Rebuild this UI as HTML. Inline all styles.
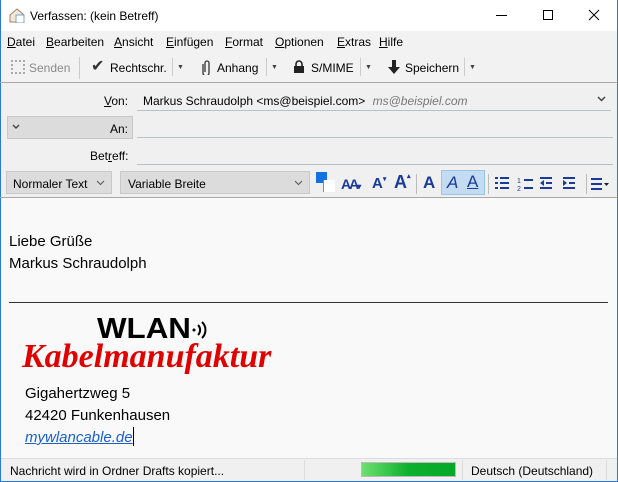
<!DOCTYPE html>
<html><head><meta charset="utf-8"><style>
*{margin:0;padding:0;box-sizing:border-box}
body{width:618px;height:482px;overflow:hidden;font-family:"Liberation Sans",sans-serif;font-size:12px;color:#000;background:#f0f0f0;position:relative}
.win{position:absolute;left:0;top:0;width:618px;height:482px;border:1px solid #2b79d6;border-top:none}
.a{position:absolute;white-space:nowrap}
u{text-decoration:underline}
.line{position:absolute;height:1px;background:#b8c0cc}
.btn{position:absolute;background:#dcdcdc;border:1px solid #c8c8c8}
.ic{position:absolute;color:#1a3a9c;font-weight:bold}
.dd{position:absolute;font-size:7px;color:#444}
</style></head><body>
<div class="a" style="left:0;top:0;width:618px;height:31px;background:#fff"></div>
<div class="a" style="left:0;top:31px;width:618px;height:53px;background:#f2f2f2"></div>
<div class="win"></div>
<svg class="a" style="left:9px;top:7px" width="16" height="16"><path d="M1 8 L8 2 L15 8 V15 H1Z" fill="#f4e8d8" stroke="#a08060"/><rect x="7" y="8" width="8" height="8" fill="#fff" stroke="#7aa0d0"/></svg>
<div class="a" style="left:30px;top:9px">Verfassen: (kein Betreff)</div>
<div class="a" style="left:496px;top:15px;width:11px;height:1px;background:#000"></div>
<div class="a" style="left:543px;top:10px;width:10px;height:10px;border:1px solid #000"></div>
<svg class="a" style="left:588px;top:9px" width="12" height="12"><path d="M1 1L11 11M11 1L1 11" stroke="#000"/></svg>
<div class="a" style="left:7px;top:35px"><u>D</u>atei</div>
<div class="a" style="left:46px;top:35px"><u>B</u>earbeiten</div>
<div class="a" style="left:114px;top:35px"><u>A</u>nsicht</div>
<div class="a" style="left:166px;top:35px"><u>E</u>infügen</div>
<div class="a" style="left:225px;top:35px"><u>F</u>ormat</div>
<div class="a" style="left:275px;top:35px"><u>O</u>ptionen</div>
<div class="a" style="left:337px;top:35px"><u>E</u>xtras</div>
<div class="a" style="left:379px;top:35px"><u>H</u>ilfe</div>
<div class="a" style="left:11px;top:60px;width:14px;height:14px;border:2px dotted #aaa"></div>
<div class="a" style="left:29px;top:61px;color:#8a8a8a">Senden</div>
<div class="a" style="left:79px;top:57px;width:1px;height:22px;background:#ccc"></div>
<div class="a" style="left:91px;top:56px;font-size:16px;color:#333">✔</div>
<div class="a" style="left:110px;top:61px">Rechtschr.</div>
<div class="a" style="left:172px;top:58px;width:1px;height:18px;background:#ccc"></div>
<div class="dd" style="left:177px;top:64px">▼</div>
<svg class="a" style="left:202px;top:59px" width="10" height="16"><path d="M3 13V4a2 2 0 0 1 4 0v10a3 3 0 0 1-6 0V5" fill="none" stroke="#333" stroke-width="1.3"/></svg>
<div class="a" style="left:217px;top:61px">Anhang</div>
<div class="a" style="left:266px;top:58px;width:1px;height:18px;background:#ccc"></div>
<div class="dd" style="left:271px;top:64px">▼</div>
<svg class="a" style="left:293px;top:60px" width="12" height="14"><path d="M3 7V4a3 3 0 0 1 6 0v3" fill="none" stroke="#222" stroke-width="1.6"/><rect x="1" y="6" width="10" height="7" fill="#222"/></svg>
<div class="a" style="left:311px;top:61px">S/MIME</div>
<div class="a" style="left:360px;top:58px;width:1px;height:18px;background:#ccc"></div>
<div class="dd" style="left:365px;top:64px">▼</div>
<svg class="a" style="left:388px;top:60px" width="12" height="14"><path d="M4 0h4v7h4l-6 7-6-7h4z" fill="#222"/></svg>
<div class="a" style="left:405px;top:61px">Speichern</div>
<div class="a" style="left:464px;top:58px;width:1px;height:18px;background:#ccc"></div>
<div class="dd" style="left:469px;top:64px">▼</div>
<div class="a" style="left:0;top:82px;width:618px;height:1px;background:#a8a8a8"></div>
<div class="a" style="left:104px;top:94px"><u>V</u>on:</div>
<div class="a" style="left:143px;top:94px">Markus Schraudolph &lt;ms@beispiel.com&gt; <span style="font-style:italic;color:#777;margin-left:4px">ms@beispiel.com</span></div>
<svg class="a" style="left:597px;top:96px" width="9" height="6"><path d="M1 1l3.5 3.5L8 1" fill="none" stroke="#444" stroke-width="1.5"/></svg>
<div class="line" style="left:137px;top:110px;width:474px"></div>
<div class="btn" style="left:7px;top:116px;width:126px;height:23px"></div>
<svg class="a" style="left:12px;top:124px" width="8" height="5"><path d="M1 1l3 3 3-3" fill="none" stroke="#444" stroke-width="1.4"/></svg>
<div class="a" style="left:110px;top:122px">An:</div>
<div class="line" style="left:137px;top:137px;width:476px"></div>
<div class="a" style="left:90px;top:149px">Bet<u>r</u>eff:</div>
<div class="line" style="left:137px;top:164px;width:476px"></div>
<div class="btn" style="left:6px;top:171px;width:106px;height:23px"></div>
<div class="a" style="left:13px;top:177px">Normaler Text</div>
<svg class="a" style="left:96px;top:180px" width="9" height="6"><path d="M1 1l3.5 3.5L8 1" fill="none" stroke="#555" stroke-width="1"/></svg>
<div class="btn" style="left:120px;top:171px;width:190px;height:23px"></div>
<div class="a" style="left:128px;top:177px">Variable Breite</div>
<svg class="a" style="left:294px;top:180px" width="9" height="6"><path d="M1 1l3.5 3.5L8 1" fill="none" stroke="#555" stroke-width="1"/></svg>
<div class="a" style="left:316px;top:172px;width:11px;height:11px;background:#1570e0"></div>
<div class="a" style="left:323px;top:180px;width:12px;height:12px;background:#fff;border-left:1px solid #888"></div>
<div class="ic" style="left:341px;top:176px;font-size:14px;letter-spacing:-2px">AA<span style="font-size:8px;letter-spacing:0">▾</span></div>
<div class="ic" style="left:372px;top:175px;font-size:15px">A<span style="font-size:7px;vertical-align:top">▾</span></div>
<div class="ic" style="left:394px;top:172px;font-size:18px">A<span style="font-size:7px;vertical-align:top">▴</span></div>
<div class="a" style="left:416px;top:174px;width:1px;height:20px;background:#bbb"></div>
<div class="ic" style="left:423px;top:173px;font-size:17px">A</div>
<div class="a" style="left:441px;top:170px;width:44px;height:25px;background:#c4dcf2;border:1px solid #9cc4ea"></div>
<div class="ic" style="left:447px;top:173px;font-size:17px;font-style:italic;font-weight:normal">A</div>
<div class="ic" style="left:467px;top:172px;font-size:17px;font-weight:normal;text-decoration:underline">A</div>
<div class="a" style="left:488px;top:174px;width:1px;height:20px;background:#bbb"></div>
<svg class="a" style="left:494px;top:176px" width="118" height="16" fill="#1a3a9c">
<rect x="1" y="1" width="3" height="2"/><rect x="6" y="1" width="9" height="2"/><rect x="1" y="6" width="3" height="2"/><rect x="6" y="6" width="9" height="2"/><rect x="1" y="11" width="3" height="2"/><rect x="6" y="11" width="9" height="2"/>
<text x="23" y="7" font-size="7" font-family="Liberation Sans">1</text><text x="23" y="15" font-size="7" font-family="Liberation Sans">2</text><rect x="30" y="3" width="9" height="2"/><rect x="30" y="11" width="9" height="2"/>
<rect x="46" y="1" width="12" height="2"/><rect x="52" y="6" width="6" height="2"/><rect x="46" y="11" width="12" height="2"/><path d="M46 7l4-3v6z"/>
<rect x="69" y="1" width="12" height="2"/><rect x="75" y="6" width="6" height="2"/><rect x="69" y="11" width="12" height="2"/><path d="M73 7l-4-3v6z"/>
<rect x="97" y="2" width="11" height="2"/><rect x="97" y="7" width="11" height="2"/><rect x="97" y="12" width="11" height="2"/><path d="M110 7h5l-2.5 3z" fill="#222"/>
</svg>
<div class="a" style="left:586px;top:174px;width:1px;height:20px;background:#bbb"></div>
<div class="a" style="left:0;top:197px;width:618px;height:1px;background:#a8a8a8"></div>
<div class="a" style="left:1px;top:198px;width:616px;height:260px;background:#f9f9f9"></div>
<div class="a" style="left:9px;top:231px;font-size:15px;line-height:22px">Liebe Grüße<br>Markus Schraudolph</div>
<div class="a" style="left:9px;top:302px;width:599px;height:1px;background:#333"></div>
<div class="a" style="left:97px;top:313px;font-weight:900;font-size:29px;line-height:32px;transform:scaleX(1.08);transform-origin:left">WLAN</div>
<svg class="a" style="left:191px;top:320px" width="20" height="22"><circle cx="3" cy="10" r="1.5"/><path d="M7 5a7 7 0 0 1 0 10M11 2a11 11 0 0 1 0 16" fill="none" stroke="#000" stroke-width="2"/></svg>
<div class="a" style="left:22px;top:337px;font-family:'Liberation Serif',serif;font-style:italic;font-weight:bold;font-size:34px;line-height:40px;color:#e00000;transform:scaleX(1.0);transform-origin:left">Kabelmanufaktur</div>
<div class="a" style="left:25px;top:383px;font-size:15px;line-height:22px">Gigahertzweg 5<br>42420 Funkenhausen<br><span style="color:#1a5fd0;font-style:italic;text-decoration:underline">mywlancable.de</span><span style="display:inline-block;width:1px;height:19px;background:#000;vertical-align:-4px"></span></div>
<div class="a" style="left:1px;top:458px;width:616px;height:23px;background:#f0f0f0;border-top:1px solid #ddd"></div>
<div class="a" style="left:10px;top:464px">Nachricht wird in Ordner Drafts kopiert...</div>
<div class="a" style="left:304px;top:460px;width:1px;height:20px;background:#ddd"></div>
<div class="a" style="left:361px;top:462px;width:95px;height:15px;border:1px solid #bbb;background:linear-gradient(90deg,#6ee070,#0cb02c 50%,#06a828)"></div>
<div class="a" style="left:462px;top:460px;width:1px;height:20px;background:#ddd"></div>
<div class="a" style="left:471px;top:464px">Deutsch (Deutschland)</div>
<div class="a" style="left:606px;top:460px;width:1px;height:20px;background:#ddd"></div>
</body></html>
